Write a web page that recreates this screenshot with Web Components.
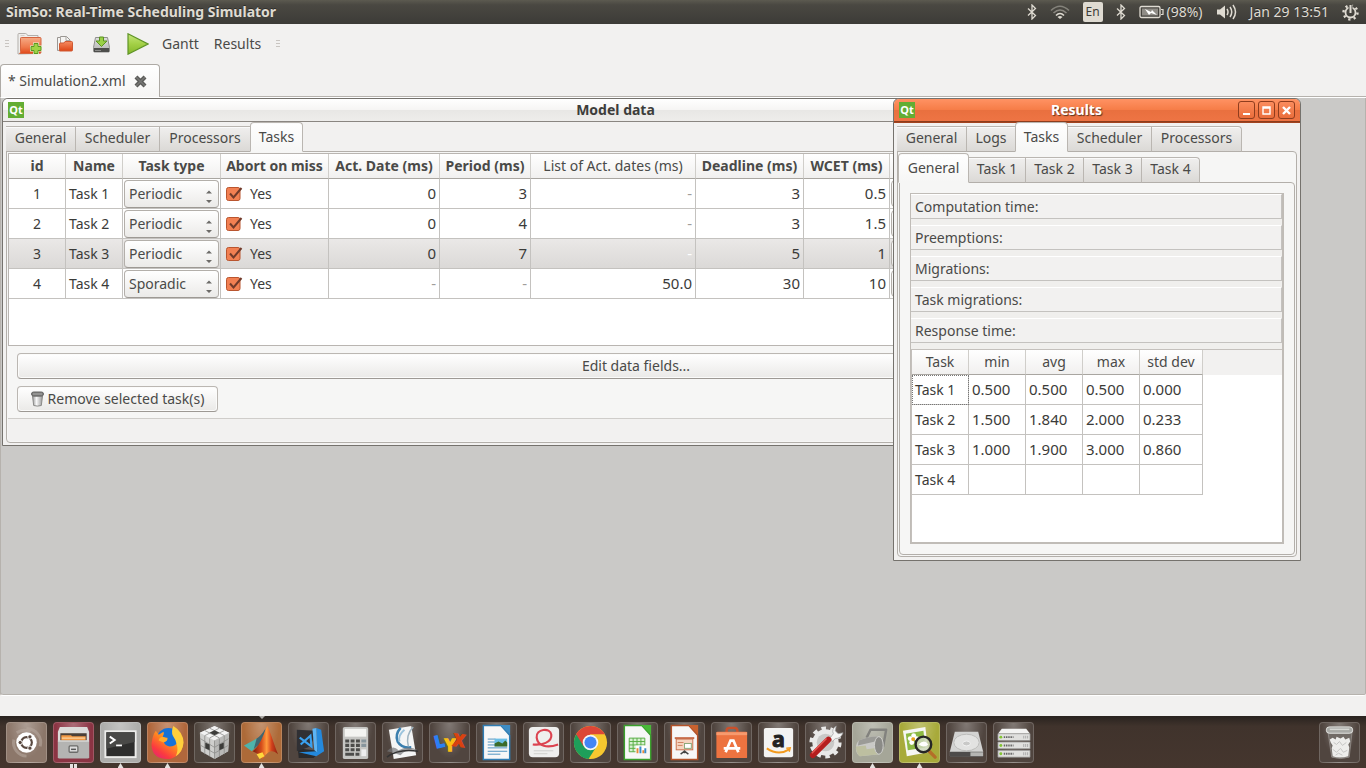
<!DOCTYPE html>
<html lang="en">
<head>
<meta charset="utf-8">
<title>SimSo: Real-Time Scheduling Simulator</title>
<style>
html, body { height: 100%; }
body { margin: 0; overflow: hidden; font: 14px/20px "Noto Sans", "Open Sans", sans-serif; color: #4a4a48; background: #f2f1f0; }
</style>
</head>
<body>
<sim-desktop></sim-desktop>

<script>
const define = (name, css, html, connect) => {
  const template = document.createElement('template');
  template.innerHTML = `<style>*{box-sizing:border-box}button{font:inherit;color:inherit;margin:0;cursor:default}${css}</style>${html}`;
  customElements.define(name, class extends HTMLElement {
    constructor() {
      super();
      this.attachShadow({ mode: 'open' }).append(template.content.cloneNode(true));
    }
    connectedCallback() { if (connect && !this.ready) { this.ready = true; connect(this, this.shadowRoot); } }
  });
};

/* ---------- icons ---------- */
const svg = (w, h, body, view) => `<svg width="${w}" height="${h}" viewBox="${view || `0 0 ${w} ${h}`}" aria-hidden="true">${body}</svg>`;
const bluetooth = svg(10, 16, '<path d="M1 4.5l7.500 7L5 15V1l3.500 3.500L1 11.500" fill="none" stroke="#dfdbd2" stroke-width="1.300"/>');
const ICONS = {
  newFolder: svg(25, 24, `<defs><linearGradient id="nf" x2="0" y2="1"><stop offset="0" stop-color="#f6ab86"/><stop offset=".6" stop-color="#ef7a4c"/><stop offset="1" stop-color="#e0491a"/></linearGradient></defs>
    <path d="M1 22V2.500q0-1 1-1h6.500q1 0 1.500 1l.5 1h10.500v18z" fill="#efeeec" stroke="#b3afab"/><path d="M3.500 3.500h4M3 6h17" stroke="#d2cecb"/>
    <path d="M4.500 5.500H23q1 0 1 1V20q0 1.500-1.500 1.500H2.500q1-.5 1-2v-13q0-1 1-1z" fill="url(#nf)" stroke="#d46540"/>
    <path d="M17 11.500h4v3h3v4h-3v3h-4v-3h-3v-4h3z" fill="#a7dd50" stroke="#e9f6d4" stroke-width="2"/><path d="M17 11.500h4v3h3v4h-3v3h-4v-3h-3v-4h3z" fill="#9ed345" stroke="#5c9622"/>`),
  open: svg(16, 16, `<defs><linearGradient id="op" x2="0" y2="1"><stop offset="0" stop-color="#f58c62"/><stop offset="1" stop-color="#dd4415"/></linearGradient></defs>
    <path d="M.5 14.500V1.500h3v-1h6l3.500 3.500v9z" fill="#f5f4f2" stroke="#9a9692"/><path d="M3.500 1v12M9 .5v4h4" fill="none" stroke="#aaa6a2"/>
    <path d="M2.500 8q0-1 1-1h3.500l1-1.500h6.500q1 0 1 1V14q0 1-1 1h-12z" fill="url(#op)" stroke="#cf5a34"/>`),
  save: svg(17, 17, `<defs><linearGradient id="sv" x2="0" y2="1"><stop offset="0" stop-color="#dededd"/><stop offset="1" stop-color="#b4b4b2"/></linearGradient></defs>
    <path d="M2.500 1.500h12l2 10v3.500q0 1-1 1h-14q-1 0-1-1v-3.500z" fill="url(#sv)" stroke="#8f8f8d"/><rect x="1" y="12" width="15" height="4" fill="#4e4e4c"/><path d="M2 14.500h6" stroke="#8c8c8a"/>
    <path d="M6.500 1h4v4h3.500L8.500 10.500 3 5h3.500z" fill="#9ad046" stroke="#5a9320"/>`),
  play: svg(22, 22, `<defs><linearGradient id="pl" x2="0" y2="1"><stop offset="0" stop-color="#c5e67c"/><stop offset=".5" stop-color="#a3d046"/><stop offset="1" stop-color="#84b62a"/></linearGradient></defs>
    <path d="M1 .8v20.400L21 11z" fill="url(#pl)" stroke="#5f9426" stroke-width="1.200"/>`),
  bin: svg(13, 16, `<defs><linearGradient id="bn"><stop offset="0" stop-color="#999"/><stop offset=".4" stop-color="#f7f7f7"/><stop offset="1" stop-color="#999"/></linearGradient></defs>
    <path d="M1.500 5l1.200 9.500q3.800 1.200 7.600 0L11.500 5z" fill="url(#bn)" stroke="#8a8a88"/><rect x=".5" y="1" width="12" height="4" rx="2" fill="#7d7d7b" stroke="#666"/><path d="M2 3h9" stroke="#aaa"/>`),
};

define('sim-icon', ':host{display:block}svg{display:block}', '<span></span>', (el, root) => {
  root.querySelector('span').innerHTML = ICONS[el.getAttribute('name')];
});

/* ---------- top panel ---------- */
define('system-panel', `
:host{display:flex;align-items:center;height:24px;padding:0 7px 0 6px;flex:none;background:linear-gradient(#5c5a50,#4a4842 20%,#3c3b37);color:#dfdbd2;text-shadow:0 -1px #2e2d2a}
h1{font-size:14px;line-height:24px;margin:0;flex:1;font-weight:bold}
.tray{display:flex;align-items:center;gap:13px}
svg{display:block}
.lang{width:20px;height:20px;border-radius:2px;background:#dfdbd2;color:#3c3b37;font-size:12px;line-height:20px;text-align:center;text-shadow:none}
.battery{display:flex;align-items:center;gap:3px}
`, `<h1>SimSo: Real-Time Scheduling Simulator</h1>
<div class="tray">
${bluetooth}
${svg(20, 16, '<g fill="none" stroke="#dfdbd2" stroke-width="1.600"><path d="M1 6.500Q10-2 19 6.500" opacity=".4"/><path d="M3.500 9Q10 3 16.500 9" opacity=".45"/><path d="M6 11.500Q10 7.500 14 11.500"/></g><path d="M10 15l-2.500-2q2.500-2 5 0z" fill="#dfdbd2"/>')}
<div class="lang">En</div>
${bluetooth}
<div class="battery">${svg(25, 14, '<rect x="1" y="1.500" width="20" height="11" rx="1.500" fill="none" stroke="#dfdbd2" stroke-width="1.300"/><rect x="3" y="3.500" width="16" height="7" fill="#8f8c86"/><path d="M22 4.500h2v5h-2" fill="none" stroke="#dfdbd2" stroke-width="1.200"/><path d="M6 4l6 3 1-2 5 5-6-2-2 2z" fill="#fff"/>')}<span>(98%)</span></div>
${svg(21, 16, '<path d="M1 5.500h3L9 1.500v13L4 10.500H1z" fill="#dfdbd2"/><g fill="none" stroke="#dfdbd2" stroke-width="1.500"><path d="M11 5q2 3 0 6M14 3q3.500 5 0 10M17 1q5 7 0 14"/></g>')}
<time>Jan 29 13:51</time>
${svg(17, 17, '<circle cx="8.500" cy="8.500" r="5" fill="none" stroke="#dfdbd2" stroke-width="1.800"/><circle cx="8.500" cy="8.500" r="7" fill="none" stroke="#dfdbd2" stroke-width="2.400" stroke-dasharray="2.200 3.300"/><path d="M8.500 0v9" stroke="#4a4842" stroke-width="4"/><path d="M8.500 1v8" stroke="#dfdbd2" stroke-width="2"/>')}
</div>`);

/* ---------- toolbar ---------- */
const grip = '<i class="grip"></i>';
define('tool-bar', `
:host{display:flex;align-items:center;height:40px;flex:none;padding:0 5px;font-size:14px}
button{border:0;background:none;padding:0;line-height:20px}
.grip{display:block;width:4px;height:8px;background:repeating-linear-gradient(#c9c5c1 0 1px,transparent 1px 3px)}
.a{margin-left:8px}.b{margin-left:15px}.c{margin-left:20px}.d{margin-left:17px}.e{margin-left:13px}
`, `${grip}
<button class="a" aria-label="New simulation"><sim-icon name="newFolder"></sim-icon></button>
<button class="b" aria-label="Open"><sim-icon name="open"></sim-icon></button>
<button class="c" aria-label="Save"><sim-icon name="save"></sim-icon></button>
<button class="d" aria-label="Run"><sim-icon name="play"></sim-icon></button>
<button class="e">Gantt</button><button class="b">Results</button><span class="b">${grip}</span>`);

/* ---------- document tab ---------- */
define('document-tab', `
:host{display:block;height:33px;flex:none;border-bottom:1px solid #b6b2ad}
button{display:flex;align-items:center;gap:8px;width:160px;height:33px;padding:0 9px 0 7px;border:1px solid #aeaaa5;border-bottom:0;border-radius:4px 4px 0 0;background:linear-gradient(#fff,#f6f5f4);font-size:14px;white-space:nowrap}
svg{display:block}
`, `<button role="tab" aria-selected="true"><span>* Simulation2.xml</span>${svg(13, 13, '<path d="M2 2l9 9m0-9l-9 9" stroke="#5b5b59" stroke-width="4.200"/><path d="M2 2l9 9m0-9l-9 9" stroke="#777775" stroke-width="1.500"/>')}</button>`);

/* ---------- tabs ---------- */
define('tab-strip', `
:host{display:flex;align-items:flex-end;height:30px;position:relative;font-size:14px;flex:none}
button{height:26px;padding:0 7px 2px;border:1px solid #bab6b1;border-left-width:0;border-bottom-color:#b3afaa;background:linear-gradient(#f0efee,#dbd9d6);line-height:22px;box-shadow:inset 0 1px #fafafa;white-space:nowrap}
button:first-child,button[aria-selected=true]{border-left-width:1px}
button:first-child{border-top-left-radius:4px}
button:last-child{border-top-right-radius:4px}
button[aria-selected=true]{height:30px;border-radius:4px 4px 0 0;border-bottom-color:#f6f6f5;background:linear-gradient(#fff,#f6f6f5);margin-left:-1px;padding-bottom:0}
button[aria-selected=true]:first-child{margin-left:0}
`, '', (el, root) => {
  const selected = el.getAttribute('selected');
  el.setAttribute('role', 'tablist');
  for (const [label, width] of el.getAttribute('tabs').split('|').map(t => t.split(':'))) {
    const b = document.createElement('button');
    b.textContent = label;
    b.style.width = width + 'px';
    b.setAttribute('role', 'tab');
    b.setAttribute('aria-selected', label === selected);
    root.append(b);
  }
});

/* ---------- MDI window ---------- */
const control = (label, body) => `<button aria-label="${label}">${svg(13, 13, body)}</button>`;
define('sub-window', `
:host{display:flex;flex-direction:column;border:1px solid #75726d;border-radius:6px 6px 0 0;background:#f2f1f0;overflow:hidden}
header{display:flex;align-items:center;height:23px;padding:0 5px;gap:2px;border-bottom:1px solid #8a8681;background:linear-gradient(#fff,#f6f5f4 48%,#e8e7e5 52%,#eeedeb);flex:none;color:#3d3d3b}
:host([active]) header{background:linear-gradient(#ff9263,#f67d48 48%,#e9703f 52%,#ee7444);border-bottom-color:#8d3d1d;color:#fff;text-shadow:1px 1px 1px #5b3320;border-radius:5px 5px 0 0;box-shadow:0 0 0 1px #a3431f}
h2{flex:1;margin:0;text-align:center;font-size:14px;line-height:22px}
.qt{display:block;flex:none}
.controls{display:flex;gap:3px}
button{width:17px;height:18px;padding:0;border:1px solid #8f3d1e;border-radius:3px;background:linear-gradient(#fb8c5d,#ea6d3b);display:grid;place-items:center}
button svg{display:block}
:host(:not([active])) button{border-color:#aaa;background:#eee}
.body{flex:1;display:flex;flex-direction:column;padding:0 3px 3px}
`, `<header>
<svg class="qt" width="16" height="16" viewBox="0 0 16 16" role="img" aria-label="Qt"><rect width="16" height="16" fill="#63ad33"/><text x="8" y="12" text-anchor="middle" font-family="Noto Sans, sans-serif" font-weight="bold" font-size="11" fill="#fff" style="text-shadow:none">Qt</text></svg>
<h2></h2><div class="controls">
${control('Minimise', '<path d="M3 10h7" stroke="#fff" stroke-width="2"/>')}
${control('Maximise', '<path d="M3 3h7v7H3zM3 4h7" fill="none" stroke="#fff" stroke-width="1.400"/>')}
${control('Close', '<path d="M3 3l7 7m0-7l-7 7" stroke="#fff" stroke-width="2.400"/>')}
</div></header><div class="body"><slot></slot></div>`, (el, root) => {
  root.querySelector('h2').textContent = el.getAttribute('heading');
});

define('tab-pane', `
:host{display:flex;flex-direction:column;flex:1;margin-top:-1px;border:1px solid #b3afaa;border-radius:0 4px 4px 4px;background:#f6f6f5;padding:1px}
`, '<slot></slot>');

/* ---------- task table ---------- */
const COLUMNS = [['id', 57], ['Name', 57], ['Task type', 98], ['Abort on miss', 108], ['Act. Date (ms)', 111], ['Period (ms)', 91], ['List of Act. dates (ms)', 165, 'light'], ['Deadline (ms)', 108], ['WCET (ms)', 86], ['', 200]];
const TASKS = [
  [1, 'Task 1', 'Periodic', '0', '3', '-', '3', '0.5'],
  [2, 'Task 2', 'Periodic', '0', '4', '-', '3', '1.5'],
  [3, 'Task 3', 'Periodic', '0', '7', '-', '5', '1'],
  [4, 'Task 4', 'Sporadic', '-', '-', '50.0', '30', '10'],
];
const uri = s => `url("data:image/svg+xml,${encodeURIComponent('<svg xmlns="http://www.w3.org/2000/svg" ' + s + '</svg>')}")`;
const arrows = uri('width="8" height="16"><path d="M1 5.5L4 2.500l3 3zM1 12l3 3 3-3z" fill="#6c6a67"/>');
const tick = uri('width="18" height="16"><rect x="1.500" y="1.500" width="13.500" height="13" rx="2" fill="#f28052" stroke="#b9552f"/><path d="M5 7.500l3.500 4L16.500 2" fill="none" stroke="#713a2a" stroke-width="2"/>');
define('task-table', `
:host{display:block;height:193px;border:1px solid #b9b5b1;background:#fff;overflow:hidden;flex:none}
table{table-layout:fixed;border-collapse:separate;border-spacing:0;width:1081px;color:#3b3b39}
th{height:25px;padding:0;border-right:1px solid #d0ceca;border-bottom:1px solid #a9a6a1;background:linear-gradient(#fff,#f1f0ef);font-size:14px;line-height:20px;white-space:nowrap;color:#4a4a48}
th.light{font-weight:normal}
td{height:30px;padding:0 3px;border-right:1px solid #c4c2bf;border-bottom:1px solid #c4c2bf;line-height:20px;white-space:nowrap}
td.n{text-align:right;font-size:15px;padding-bottom:2px}
td:first-child{text-align:center}
.none{color:#a09e9b}
tr.on td{background:linear-gradient(#eae8e7,#dbd9d7)}
tr.on .none{color:#fff}
td.pick{padding:0 1px}
select{appearance:none;display:block;width:95px;height:28px;padding:0 4px;border:1px solid #b3afaa;border-bottom-color:#9d9994;border-radius:4px;font:inherit;color:#4a4a48;background:${arrows} no-repeat right 5px top 7px,linear-gradient(#fff,#ebeae8)}
label{display:flex;align-items:center;gap:7px;padding-left:1px}
input{appearance:none;margin:0;width:18px;height:16px;background:${tick}}
td.edge{padding:1px 0 1px 1px}
.edge button{display:block;width:190px;height:27px;border:1px solid #b3afaa;border-radius:4px;background:linear-gradient(#fff,#ebeae8)}
`, '<table><colgroup></colgroup><thead><tr></tr></thead><tbody></tbody></table>', (el, root) => {
  root.querySelector('colgroup').innerHTML = COLUMNS.map(c => `<col style="width:${c[1]}px">`).join('');
  root.querySelector('thead tr').innerHTML = COLUMNS.map(c => `<th class="${c[2] || ''}">${c[0]}</th>`).join('');
  root.querySelector('tbody').innerHTML = TASKS.map(([id, name, type, ...nums]) => `<tr class="${id === 3 ? 'on' : ''}">
    <td>${id}</td><td>${name}</td>
    <td class="pick"><select aria-label="Type of ${name}"><option>${type}</option></select></td>
    <td><label><input type="checkbox" checked>Yes</label></td>
    ${nums.map(n => `<td class="n ${n === '-' ? 'none' : ''}">${n}</td>`).join('')}
    <td class="edge"><button aria-label="Followed by, ${name}"></button></td></tr>`).join('');
});

define('push-button', `
:host{display:block}
button{display:flex;align-items:center;justify-content:center;gap:4px;width:100%;height:26px;padding:0 8px;border:1px solid #bbb7b2;border-bottom-color:#9d9994;border-radius:4px;background:linear-gradient(#fff,#eae9e7);white-space:nowrap;box-shadow:inset 0 0 0 1px #fbfbfa}
`, '<button><slot></slot></button>');

define('model-window', `
:host{display:contents}
.actions{display:flex;flex-direction:column;align-items:flex-start;gap:7px;padding:7px 9px 6px;border-bottom:1px solid #cfcdca}
.wide{align-self:stretch}.remove{min-width:201px}
.foot{height:22px;background:#f2f1f0}
`, `<tab-strip tabs="General:70|Scheduler:84|Processors:91|Tasks:53" selected="Tasks"></tab-strip>
<tab-pane><task-table></task-table>
<div class="actions"><push-button class="wide">Edit data fields...</push-button>
<push-button class="remove"><sim-icon name="bin"></sim-icon>Remove selected task(s)</push-button></div>
<div class="foot"></div></tab-pane>`);

/* ---------- results ---------- */
define('result-group', `
:host{display:block;height:25px;padding:1px 4px;border-top:1px solid #fff;border-bottom:1px solid #c4c2bf;border-right:1px solid #c4c2bf;margin-bottom:6px;line-height:22px;background:#f2f1f0;flex:none}
`, '<slot></slot>');

define('result-table', `
:host{display:block;flex:1;background:#fff;border-left:1px solid #c4c0bc;border-top:1px solid #c4c0bc}
table{width:100%;table-layout:fixed;border-collapse:separate;border-spacing:0;color:#3b3b39}
th{height:25px;padding:0;border-right:1px solid #d0ceca;border-bottom:1px solid #a9a6a1;background:linear-gradient(#fff,#f1f0ef);font-weight:normal;color:#4a4a48;white-space:nowrap}
th:last-child{background:#f2f1f0;border:0}
td{height:30px;padding:0 3px 2px;border-right:1px solid #c4c2bf;border-bottom:1px solid #c4c2bf;line-height:20px;font-size:15px;white-space:nowrap}
td:first-child{font-size:14px;padding-bottom:0}
td:last-child{border:0}
tbody tr:first-child td:first-child{outline:1px dotted #777;outline-offset:-1px}
`, `<table><colgroup><col style="width:57px"><col style="width:57px"><col style="width:57px"><col style="width:57px"><col style="width:63px"><col></colgroup>
<thead><tr><th>Task</th><th>min</th><th>avg</th><th>max</th><th>std dev</th><th></th></tr></thead><tbody></tbody></table>`, (el, root) => {
  root.querySelector('tbody').innerHTML = [
    ['Task 1', '0.500', '0.500', '0.500', '0.000', ''],
    ['Task 2', '1.500', '1.840', '2.000', '0.233', ''],
    ['Task 3', '1.000', '1.900', '3.000', '0.860', ''],
    ['Task 4', '', '', '', '', ''],
  ].map(r => `<tr>${r.map(c => `<td>${c}</td>`).join('')}</tr>`).join('');
});

define('results-window', `
:host{display:contents}
.box{display:flex;flex-direction:column;flex:1;margin:9px;border:2px solid #c0bcb7;border-width:1px 2px 2px 1px;background:#f0efed}
`, `<tab-strip tabs="General:70|Logs:49|Tasks:53|Scheduler:84|Processors:90" selected="Tasks"></tab-strip>
<tab-pane><tab-strip tabs="General:71|Task 1:57|Task 2:58|Task 3:58|Task 4:58" selected="General"></tab-strip>
<tab-pane><div class="box">
<result-group>Computation time:</result-group><result-group>Preemptions:</result-group><result-group>Migrations:</result-group><result-group>Task migrations:</result-group><result-group>Response time:</result-group>
<result-table></result-table></div></tab-pane></tab-pane>`);

/* ---------- workspace ---------- */
define('mdi-area', `
:host{display:block;position:relative;flex:1;min-height:0;background:#cac9c7;border:1px solid #fff;border-width:1px 0 1px 1px;border-left-color:#b6b2ad;border-radius:0 0 3px 3px;box-shadow:inset 0 -1px #b6b2ad,inset -1px 0 #b6b2ad;overflow:hidden}
sub-window{position:absolute}
.model{left:1px;top:0;width:1268px;height:348px}
.results{left:892px;top:0;width:408px;height:463px}
`, `<sub-window class="model" heading="Model data"><model-window></model-window></sub-window>
<sub-window class="results" heading="Results" active><results-window></results-window></sub-window>`);

/* ---------- launcher ---------- */
const page = (edge, corner, inner) => `<path d="M6.500 2.500h18l9 10v25h-27z" fill="#f7f7f7" stroke="${edge}" stroke-width="1.500"/><path d="M24 2h10v10z" fill="${corner}"/>${inner}`;
const APPS = [
  ['Dash home', '#8c776a', '<g fill="none" stroke="#b5a69c" stroke-width="3" opacity=".6"><path d="M20 6a14 14 0 0 1 14 18M20 34A14 14 0 0 1 7 17M10 10a14 14 0 0 1 14-1"/></g><circle cx="20" cy="20" r="10.500" fill="#fff"/><circle cx="20" cy="20" r="5.500" fill="none" stroke="#59483f" stroke-width="2.200"/><g fill="#59483f" stroke="#fff"><circle cx="13.500" cy="20" r="2.200"/><circle cx="23.500" cy="14.200" r="2.200"/><circle cx="23.500" cy="25.800" r="2.200"/></g>'],
  ['Files', '#8b3443', '<path d="M6 4h28l2 5v27H4V9z" fill="#dcdcda"/><rect x="6.500" y="10.500" width="27" height="7.500" fill="#4b4038"/><path d="M7.500 18v-5.500h10l1 1h14V18z" fill="#f39a45"/><path d="M8 15.500h24" stroke="#fbd9a8" stroke-width="1.200"/><path d="M4 18h32v17a1.500 1.500 0 0 1-1.500 1.500h-29A1.500 1.500 0 0 1 4 35z" fill="#b4b4b2"/><path d="M4 18.500h32" stroke="#e6e6e4"/><rect x="15.500" y="23.500" width="9" height="6.500" rx="1" fill="#ddd" stroke="#6b6b69" stroke-width="1.300"/><path d="M17.500 27h5" stroke="#555" stroke-width="1.500"/>', 2],
  ['Terminal', '#adadab', '<rect x="3.500" y="7.500" width="33" height="28.500" fill="#ececea"/><rect x="5.500" y="9.500" width="29" height="24.500" fill="#2e2e2d"/><path d="M5.500 9.500h29v10l-29 7z" fill="#494947"/><path d="M9 14l5 3.500-5 3.500" fill="none" stroke="#fff" stroke-width="2"/><path d="M15.500 23h6" stroke="#fff" stroke-width="1.800"/>', 1],
  ['Firefox', '#b0673c', '<defs><linearGradient id="ff" x1=".9" x2=".1" y2="1"><stop offset="0" stop-color="#ffd43c"/><stop offset=".45" stop-color="#ff8320"/><stop offset=".75" stop-color="#fb3a40"/><stop offset="1" stop-color="#e0207a"/></linearGradient></defs><circle cx="21" cy="17" r="12" fill="#1672d8"/><path d="M8 8l3 4 5-3q1 3-1 5 2 1 5 1 0 3-4 4 1 4 6 5 6 0 8-4 3-5 1-10 4 4 5 10 0 8-6 13-5 4-11 4Q10 36.500 6 31 2.500 25 4 19 5 12 8 8z" fill="url(#ff)"/><path d="M26 3q10 6 10.500 17-1 10-8 14 3-6 1-12-1-5-4-9-2-4 .5-10z" fill="#ffcf3c"/><path d="M15 14q-4 1-4 4l5 2q4-1 4-4z" fill="#ffab2e"/>', 1],
  ['Virtual machines', '#50463f', '<path d="M20 3l15 7-1 19-14 8-14-8L5 10z" fill="#cfcfcd"/><path d="M20 3l15 7-15 8L5 10z" fill="#f2f2f2"/><path d="M20 18l15-8-1 19-14 8z" fill="#b9b9b7"/><path d="M10 7.700l15 7.600M15 5.300l15 7.600M30 7.700l-15 7.600M25 5.300L10 13M5.500 16l14.500 9 14.500-9M6 23l14 8 14-8M10 13v19M15 16v18M25 16v18M30 13v19M20 18v19" stroke="#8c8c8a" fill="none" stroke-width=".800"/><path d="M20 7.500l5 2.500-5 2.500-5-2.500zM10.500 20l4.500 2v6l-4.500-2zM25 22l4.500-2v6L25 28z" fill="#3c3c3a"/>'],
  ['MATLAB', '#ad6a38', '<defs><linearGradient id="ml"><stop offset="0" stop-color="#7a1a10"/><stop offset=".35" stop-color="#d8501c"/><stop offset=".55" stop-color="#ff9a3c"/><stop offset=".75" stop-color="#d0401c"/><stop offset="1" stop-color="#8c2010"/></linearGradient></defs><path d="M2 23l13-7 3 5-8 8z" fill="#4fb3aa"/><path d="M15 16q4-2 9-10l-3 14-6 4-3 3z" fill="#3f6670"/><path d="M11 29c8-7 10-15 15-26 4 8 7 20 11 29-6-5-10-4-16 5l-4-5z" fill="url(#ml)"/><path d="M18 37l-3-5 6-2 2 4z" fill="#ffd83c"/>', 1, 1],
  ['Visual Studio Code', '#50453f', '<path d="M9 26l16 2 10-1-10 9H10z" fill="#2a2a2c"/><path d="M8 7l20 1-6 16-14 5z" fill="#303034"/><path d="M28 5l5 2 3 22-8 5-18-4 19-1z" fill="#2489dc"/><path d="M28 5l-4 1 2 22 3 2z" fill="#5cb4f4"/><path d="M11 15l12 9-1-11-10 9" fill="none" stroke="#3aa0ee" stroke-width="2.200"/>'],
  ['Calculator', '#50453f', '<rect x="7" y="4" width="26" height="33" rx="2" fill="#c6c6c3"/><rect x="9" y="6" width="22" height="8" fill="#f4f4f1"/><g stroke="#4c4c4a" stroke-width="3.200" stroke-dasharray="4 1.500"><path d="M9.500 18.500h15M9.500 23h15M9.500 27.500h15"/></g><path d="M9.500 32h9M20 32h4" stroke="#4c4c4a" stroke-width="3.200"/><path d="M26 18.500h5M26 23h5" stroke="#87959c" stroke-width="3.200"/><path d="M26 30.500h5" stroke="#eee" stroke-width="7"/>'],
  ['Document viewer', '#50453f', '<path d="M6 7l23-4 5 30-23 4z" fill="#f4f5f5"/><path d="M18 5q-6 7-3 14 4 7 14 6" fill="none" stroke="#3b7fae" stroke-width="2.600"/><path d="M22 7q-7 6-5 12" stroke="#9cc4dd" stroke-width="2" fill="none"/><path d="M31 4q-8 8-5 20" stroke="#9fb4c0" fill="none" stroke-width="1.500"/><path d="M4 29q6-7 12-1 10-6 20 0-12-2-18 5-8-3-14-4z" fill="#76787a" opacity=".7"/><path d="M4 35q12-9 32-6" fill="none" stroke="#333" stroke-width="1.500"/>'],
  ['LyX', '#50453f', '<g font-family="Noto Sans, sans-serif" font-weight="bold" font-size="17" stroke-width="1.500"><text x="5" y="25" fill="#2b80f5" stroke="#2b80f5" transform="rotate(-14 9 20)">L</text><text x="15" y="29" fill="#fbbd12" stroke="#fbbd12">Y</text><text x="24" y="24" fill="#d9420f" stroke="#d9420f" transform="rotate(8 30 18)">X</text></g>'],
  ['LibreOffice Writer', '#50453f', page('#2f7db4', '#3d8cc4', '<path d="M11 16.500h8M11 19.500h8M11 22.500h8M11 25.500h20M11 29h20M11 32h13" stroke="#4d92bf"/><rect x="18" y="16" width="13" height="8" fill="#6bbfe6"/><path d="M18 24v-3l4-2 4 2 3-3 2 2v4z" fill="#3b6b28"/>')],
  ['Document scanner', '#50453f', '<rect x="5" y="4" width="31" height="31" rx="4" fill="#efefee"/><path d="M35 22C24 26 14 24 13 15S27 4 28 12 18 23 9 22" fill="none" stroke="#dc4350" stroke-width="2.200"/><path d="M10 28.500h20M10 31.500h14" stroke="#cfcfcd"/>'],
  ['Chrome', '#50453f', '<circle cx="20" cy="20" r="17" fill="#f6c72f"/><path d="M5.300 11.500A17 17 0 0 0 18 37l8.500-13.500z" fill="#1e9e5a"/><path d="M5.300 11.500L13 24l7-12.500h14.700A17 17 0 0 0 5.300 11.500z" fill="#dd4637"/><circle cx="20" cy="20" r="8" fill="#f5f5f5"/><circle cx="20" cy="20" r="6.200" fill="#4285f4"/>'],
  ['LibreOffice Calc', '#50453f', page('#3aa02c', '#48b838', '<path d="M11.500 15.500h16v14h-16zM11.500 19h16M11.500 22.500h16M11.500 26h16M15.500 15.500v14M19.500 15.500v14M23.500 15.500v14" fill="#d9f0d2" stroke="#58ae45"/><rect x="18" y="23" width="11" height="8" fill="#fff"/><path d="M20 31v-5M26 31v-3" stroke="#e58938" stroke-width="2"/><path d="M23 31v-7M28 31v-5" stroke="#3a8bc9" stroke-width="2"/>')],
  ['LibreOffice Impress', '#50453f', page('#b4532a', '#c8622f', '<path d="M10 15.500h20" stroke="#c66a47" stroke-width="2"/><rect x="11.500" y="16.500" width="17" height="11" fill="#f6d4c0" stroke="#c9714e"/><path d="M13 20h6M13 23h5" stroke="#cf8361"/><rect x="20" y="21" width="7" height="5" fill="#fff" stroke="#8ba87a"/><path d="M20 28v3M16 32l4-3 4 3" stroke="#444" fill="none" stroke-width="1.500"/>')],
  ['Ubuntu Software', '#50453f', '<path d="M15 13V8q0-3 3-3h5q3 0 3 3v5" fill="none" stroke="#c9502b" stroke-width="2.500"/><rect x="4.500" y="9" width="31.500" height="27" rx="1" fill="#ed7340"/><path d="M4.500 11h31.500" stroke="#f79a6e" stroke-width="3"/><path d="M14 30l5-12h3l5 12M12 26h17" fill="none" stroke="#fff" stroke-width="2.800"/>'],
  ['Amazon', '#50453f', '<rect x="5" y="5" width="30" height="30" rx="2" fill="#f3f3f2"/><text x="20" y="25" text-anchor="middle" font-family="Noto Sans, sans-serif" font-weight="bold" font-size="22" fill="#222" stroke="#222">a</text><path d="M8 26q12 8 23 1" fill="none" stroke="#f39a1e" stroke-width="2"/><path d="M28 26l4-.500-1 4" fill="none" stroke="#f39a1e" stroke-width="1.500"/>'],
  ['System settings', '#50453f', '<circle cx="20" cy="20" r="13.500" fill="#e9e9e8"/><circle cx="20" cy="20" r="14.500" fill="none" stroke="#e9e9e8" stroke-width="4" stroke-dasharray="4.600 4.510"/><circle cx="20" cy="20" r="9" fill="#c9c9c7"/><path d="M25 15l3-4q-2-5 3-8l-1 5 3 3 5-1q-2 6-8 6l-3 3z" fill="#f4f4f3" stroke="#999" stroke-width=".700"/><path d="M7 33L23 17" stroke="#b51e1e" stroke-width="6" stroke-linecap="round"/><path d="M6 31L21 16" stroke="#e65b56" stroke-width="1.500"/>'],
  ['Paint roller', '#a5a698', '<path d="M14 15l4-8h16l-3 17h-4" fill="none" stroke="#82827e" stroke-width="2.500" stroke-linejoin="round"/><path d="M6 18q12-5 21-4v18L7 34q-4-2-4-8 0-5 3-8z" fill="#c9c9c6"/><path d="M6 18q12-5 21-4v4L5 23z" fill="#9b9b97"/><path d="M3 24l10-1 1 4 13-2v7L7 34q-4-3-4-10z" fill="#bdbfa0"/><ellipse cx="26.500" cy="23" rx="4.500" ry="9" fill="#8b8b87" stroke="#d2d2cf"/>', 1],
  ['Image viewer', '#a8aa3a', '<path d="M3 8l23-4 3 26-22 4z" fill="#f6f6f3"/><path d="M6 11l18-3 2 17-18 3z" fill="#8db944"/><g fill="#fff"><circle cx="14" cy="13" r="2.500"/><circle cx="10.500" cy="16" r="2.500"/><circle cx="12" cy="20" r="2.500"/><circle cx="17" cy="16" r="2.500"/></g><circle cx="13.500" cy="16.500" r="2" fill="#e8a01c"/><path d="M30 29l6 6" stroke="#b46e28" stroke-width="3.500" stroke-linecap="round"/><circle cx="24" cy="22" r="8" fill="#ccd7bb" fill-opacity=".85" stroke="#262626" stroke-width="2.500"/><path d="M19 22q6-6 10 0-4 4-10 0z" fill="#fff"/>', 1],
  ['Disk', '#50453f', '<path d="M8 9h24l5 20v5H3v-5z" fill="#d3d3d2"/><path d="M3 29.500h34v5H3z" fill="#4d4b4a"/><path d="M24 30h13v4H24z" fill="#b5b5b3"/><ellipse cx="20" cy="20" rx="13" ry="8.500" fill="#e2e2e1" stroke="#bbbbb9"/><ellipse cx="20" cy="21" rx="4" ry="2.500" fill="#c9c9c8" stroke="#f2f2f2"/>'],
  ['Servers', '#50453f', '<path d="M8 6h25l4 5H4z" fill="#f3f3f2"/><g><path d="M4 11h33v7H4zM4 19.500h33v7H4zM4 28h33v7H4z" fill="#e0e0de" stroke="#8e8e8c" stroke-width=".700"/><path d="M10 14.500h10M10 23h10M10 31.500h10" stroke="#666" stroke-width="2" stroke-dasharray="1.500 .800"/><path d="M30 14.500h5M30 23h5M30 31.500h5" stroke="#aaa" stroke-width="3" stroke-dasharray="1 1"/><g fill="#83c434"><circle cx="7" cy="14.500" r="1.500"/><circle cx="7" cy="23" r="1.500"/><circle cx="7" cy="31.500" r="1.500"/></g></g>'],
  ['Rubbish bin', '#50453f', '<path d="M8 8h25l-3 27q-9 3-18 0z" fill="#716b66" stroke="#a5a09c" stroke-width=".600"/><path d="M10 17l3-2 3 2 1-3 4 2 3-2 2 3 4-2 1 4-2 3 1 3-1 9q-9 3-16 0l-1-8 1-3-2-3z" fill="#ededeb"/><path d="M14 20l3 2 3-3 3 4 4-3M13 27l4 3 4-4 3 4 4-2M16 33l3-2 4 2" fill="none" stroke="#c4c4c2"/><rect x="6.500" y="4" width="27" height="6.500" rx="3" fill="#a9aaa6" stroke="#e4e4e1"/><path d="M10 6.500h20" stroke="#d6d7d3" stroke-width="1.500"/>'],
];
define('launcher-item', `
:host{display:block;position:relative;width:41px;height:52px}
button{display:block;width:41px;height:41px;padding:0;margin-top:6px;border:1px solid #ffffff2e;border-radius:4px;background:radial-gradient(ellipse at 50% 0,#ffffff48,transparent 65%),var(--tile)}
svg{display:block}
.pips{position:absolute;left:0;right:0;top:47px;display:flex;justify-content:center;height:5px;gap:1px}
.pips i{width:6px;height:5px;background:#e4e2e0;clip-path:polygon(50% 0,100% 100%,0 100%)}
.pips.two i{width:3px;clip-path:none;height:4px;margin-top:1px}
.top{position:absolute;left:18px;top:0;width:6px;height:3px;background:#aaa7a3;clip-path:polygon(0 0,100% 0,50% 100%)}
`, '<button></button>', (el, root) => {
  const [name, tile, art, running = 0, here] = APPS[el.getAttribute('app')];
  const button = root.querySelector('button');
  button.setAttribute('aria-label', name);
  button.style.setProperty('--tile', tile);
  button.innerHTML = svg(39, 39, art, '0 0 40 40');
  if (running) root.innerHTML += `<div class="pips ${running === 2 ? 'two' : ''}">${'<i></i>'.repeat(running)}</div>`;
  if (here) root.innerHTML += '<i class="top"></i>';
});
define('app-launcher', `
:host{display:block;flex:none;background:linear-gradient(#29231f,#40332c 20%,#45362e)}
nav{display:flex;gap:6px;padding:0 6px;height:52px}
launcher-item:last-child{margin-left:auto}
`, `<nav aria-label="Launcher">${APPS.map((a, i) => `<launcher-item app="${i}"></launcher-item>`).join('')}</nav>`);

define('status-strip', ':host{display:block;height:20px;flex:none;background:#f2f1f0}', '');

define('sim-desktop', ':host{display:flex;flex-direction:column;height:100vh}', `
<system-panel></system-panel><tool-bar></tool-bar><document-tab></document-tab>
<mdi-area></mdi-area><status-strip></status-strip><app-launcher></app-launcher>`);
</script>
</body>
</html>
